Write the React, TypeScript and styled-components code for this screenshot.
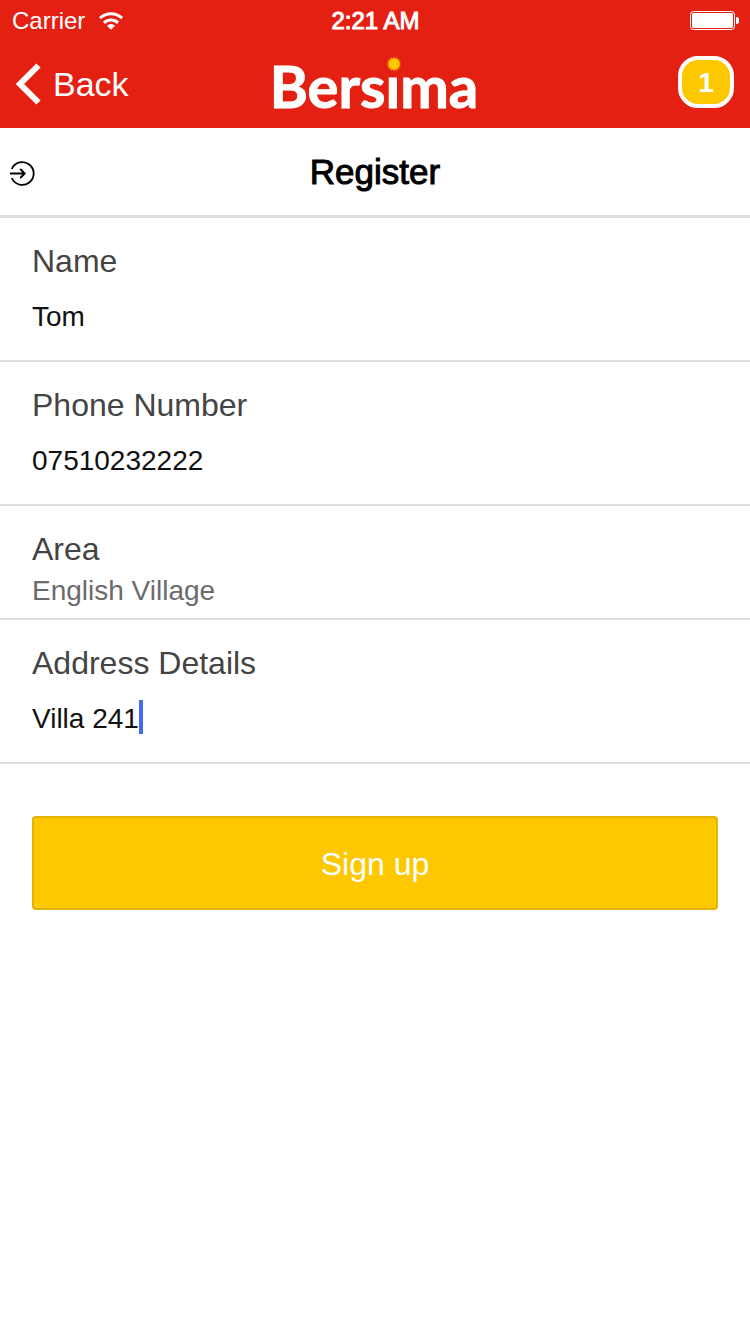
import React, { useState } from 'react';
import styled, { createGlobalStyle } from 'styled-components';

const GlobalStyle = createGlobalStyle`
  *, *::before, *::after { box-sizing: border-box; }
  body {
    margin: 0;
    background: #fff;
    font-family: "Liberation Sans", Arial, Helvetica, sans-serif;
    color: #000;
  }
  button, input, select { font-family: inherit; }
`;

const Page = styled.div`
  display: flex;
  flex-direction: column;
  min-height: 100vh;
`;

const TopArea = styled.header`
  background: #e42013;
  color: #fff;
`;

const ThreeColumns = styled.div`
  display: grid;
  grid-template-columns: 1fr auto 1fr;
  align-items: center;
`;

const StatusBar = styled(ThreeColumns)`
  height: 40px;
  padding: 2px 11px 0 12px;
  font-size: 24px;
  line-height: 28px;
`;

const Carrier = styled.div`
  display: flex;
  align-items: center;
  gap: 14px;
`;

const Clock = styled.time`
  -webkit-text-stroke: 1px currentColor;
`;

const Battery = styled.svg`
  justify-self: end;
`;

const NavBar = styled(ThreeColumns)`
  height: 88px;
  padding: 0 16px;
`;

const BackButton = styled.button`
  justify-self: start;
  display: flex;
  align-items: center;
  gap: 10px;
  padding: 0;
  border: 0;
  background: none;
  color: inherit;
  font-size: 34px;
  line-height: 40px;
  cursor: pointer;
`;

const Logo = styled.svg`
  display: block;
`;

const CartButton = styled.button`
  justify-self: end;
  width: 56px;
  height: 52px;
  margin-bottom: 4px;
  padding: 2px 0 0;
  border: 4px solid #fff;
  border-radius: 20px;
  background: #fdc800;
  color: #fff;
  font-size: 28px;
  font-weight: 700;
  line-height: 32px;
  cursor: pointer;
`;

const TitleBar = styled(ThreeColumns)`
  height: 90px;
  padding: 2px 8px 0;
  border-bottom: 3px solid #dcdcdc;
`;

const Title = styled.h1`
  margin: 0;
  padding-bottom: 2px;
  font-size: 35px;
  font-weight: 400;
  line-height: 38px;
  -webkit-text-stroke: 1px currentColor;
`;

const IconButton = styled.button`
  justify-self: start;
  display: flex;
  padding: 0;
  border: 0;
  background: none;
  color: #000;
  cursor: pointer;
`;

const Form = styled.form`
  display: flex;
  flex-direction: column;
`;

const Field = styled.div<{ $compact?: boolean }>`
  display: flex;
  flex-direction: column;
  gap: ${({ $compact }) => ($compact ? 5 : 19)}px;
  padding: 25px 32px ${({ $compact }) => ($compact ? 8 : 24)}px;
  border-bottom: 2px solid #dcdcdc;
`;

const Label = styled.label`
  color: #444;
  font-size: 32px;
  line-height: 36px;
`;

const Entry = styled.div`
  display: flex;
`;

const TextInput = styled.input<{ $hug?: boolean }>`
  flex: ${({ $hug }) => ($hug ? '0 1 auto' : '1')};
  field-sizing: ${({ $hug }) => ($hug ? 'content' : 'fixed')};
  min-width: 0;
  height: 38px;
  padding: 0;
  border: 0;
  outline: 0;
  background: none;
  color: #111;
  caret-color: transparent;
  font-size: 28px;
  line-height: 38px;
`;

const Caret = styled.span`
  width: 4px;
  height: 34px;
  background: #426bf2;
`;

const Select = styled.select`
  appearance: none;
  height: 38px;
  padding: 0;
  border: 0;
  outline: 0;
  background: none;
  color: #6b6b6b;
  font-size: 28px;
  line-height: 38px;
`;

const SubmitButton = styled.button`
  height: 94px;
  margin: 52px 32px;
  padding: 2px 0 0;
  border: 2px solid #e3b306;
  border-radius: 4px;
  background: #fdc800;
  color: #fff;
  font-size: 32px;
  line-height: 36px;
  cursor: pointer;
`;

function sunPoints(cx: number, cy: number, outer: number, inner: number, rays: number) {
  return Array.from({ length: rays * 2 }, (_, i) => {
    const r = i % 2 ? inner : outer;
    const a = (Math.PI * i) / rays;
    return `${(cx + r * Math.sin(a)).toFixed(2)},${(cy - r * Math.cos(a)).toFixed(2)}`;
  }).join(' ');
}

function WifiIcon() {
  return (
    <svg width="24" height="18" viewBox="0 0 24 18" aria-hidden="true">
      <g fill="none" stroke="#fff" strokeWidth="3">
        <path d="M1 6.2A16 16 0 0 1 23 6.2" />
        <path d="M5 10.8A10.2 10.2 0 0 1 19 10.8" />
      </g>
      <path d="M8 13.8A5.6 5.6 0 0 1 16 13.8L12 17.8Z" fill="#fff" />
    </svg>
  );
}

function BersimaLogo() {
  return (
    <Logo width="216" height="84" viewBox="0 0 216 84" role="img" aria-label="Bersima">
      <text
        x="107"
        y="66"
        textAnchor="middle"
        fill="#fff"
        stroke="#fff"
        strokeWidth="1"
        fontFamily="Lato, sans-serif"
        fontWeight="700"
        fontSize="58"
      >
        Bersima
      </text>
      <rect x="120" y="14" width="13" height="20" fill="#e42013" />
      <polygon points={sunPoints(127, 22, 7.6, 5, 16)} fill="#fdc800" />
    </Logo>
  );
}

interface TextFieldProps {
  id: string;
  label: string;
  initial: string;
  type?: string;
  active?: boolean;
}

function TextField({ id, label, initial, type = 'text', active }: TextFieldProps) {
  const [value, setValue] = useState(initial);
  return (
    <Field>
      <Label htmlFor={id}>{label}</Label>
      <Entry>
        <TextInput
          id={id}
          type={type}
          value={value}
          $hug={active}
          onChange={(e) => setValue(e.target.value)}
        />
        {active && <Caret />}
      </Entry>
    </Field>
  );
}

export default function App() {
  return (
    <Page>
      <GlobalStyle />
      <TopArea>
        <StatusBar>
          <Carrier>
            Carrier
            <WifiIcon />
          </Carrier>
          <Clock>2:21 AM</Clock>
          <Battery width="49" height="20" viewBox="0 0 49 20" aria-hidden="true">
            <rect x="0.5" y="0.5" width="44" height="18" rx="3" fill="none" stroke="#fff" />
            <rect x="2" y="2" width="41" height="15" rx="1.5" fill="#fff" />
            <path d="M46 6a3.5 3.5 0 0 1 0 7z" fill="#fff" />
          </Battery>
        </StatusBar>
        <NavBar>
          <BackButton type="button">
            <svg width="27" height="42" viewBox="0 0 27 42" aria-hidden="true">
              <path d="M22.5 2.5L4 21L22.5 39.5" fill="none" stroke="#fff" strokeWidth="6" />
            </svg>
            Back
          </BackButton>
          <BersimaLogo />
          <CartButton type="button" aria-label="Cart, 1 item">1</CartButton>
        </NavBar>
      </TopArea>
      <main>
        <TitleBar>
          <IconButton type="button" aria-label="Log in">
            <svg width="28" height="28" viewBox="0 0 28 28" fill="none" stroke="currentColor" strokeWidth="1.8">
              <path d="M3.8 10A11.4 11.4 0 1 1 3.8 19" />
              <path d="M2 14.5H16.4M12.2 10L16.8 14.5L12.2 19" />
            </svg>
          </IconButton>
          <Title>Register</Title>
        </TitleBar>
        <Form onSubmit={(e) => e.preventDefault()}>
          <TextField id="name" label="Name" initial="Tom" />
          <TextField id="phone" label="Phone Number" initial="07510232222" type="tel" />
          <Field $compact>
            <Label htmlFor="area">Area</Label>
            <Select id="area" defaultValue="English Village">
              <option>English Village</option>
            </Select>
          </Field>
          <TextField id="address" label="Address Details" initial="Villa 241" active />
          <SubmitButton type="submit">Sign up</SubmitButton>
        </Form>
      </main>
    </Page>
  );
}
